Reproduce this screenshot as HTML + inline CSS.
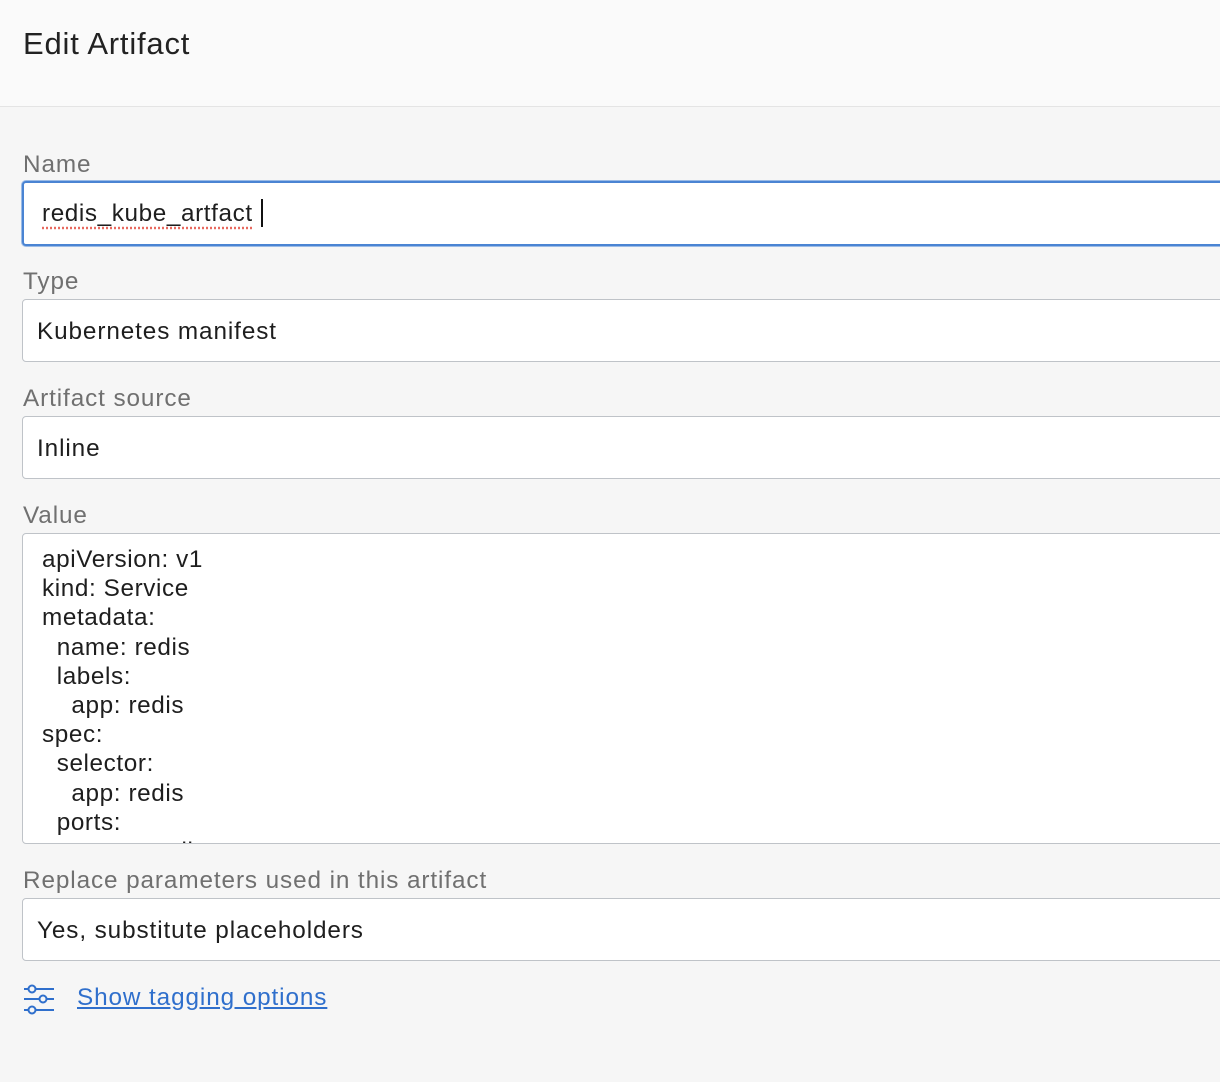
<!DOCTYPE html><html><head><style>
body{margin:0;width:1220px;height:1082px;overflow:hidden;background:#f6f6f6;font-family:"Liberation Sans",Arial,sans-serif;position:relative}
.hdr{position:absolute;left:0;top:0;width:1220px;height:106px;background:#fafafa;border-bottom:1px solid #e4e4e4}
.hdr div{position:absolute;left:23px;top:26px;font-size:31px;letter-spacing:0.8px;color:#222}
.lbl{position:absolute;left:23px;font-size:24.3px;letter-spacing:0.9px;color:#707070}
.box{position:absolute;left:22px;width:1220px;background:#fff;border:1px solid #bfc3c8;border-radius:4px;box-sizing:border-box;font-size:24.3px;letter-spacing:0.9px;color:#1e1e1e}
.box span{position:absolute;left:14px}
pre{margin:0;position:absolute;left:19px;top:11px;font-family:"Liberation Sans",Arial,sans-serif;font-size:24.3px;letter-spacing:0.6px;line-height:29.2px;color:#1e1e1e}
</style></head><body>
<div class="hdr"><div>Edit Artifact</div></div>
<div class="lbl" style="top:151px">Name</div>
<div class="box" style="top:181px;height:65px;border:2px solid #4a84d3;box-shadow:0 0 0 1px #9bbbe6"><span style="left:18px;top:17px;text-decoration:underline dotted #e86a5f;text-underline-offset:6px;letter-spacing:0.6px">redis_kube_artfact</span><span style="left:237px;top:16px;width:2px;height:28px;background:#111"></span></div>
<div class="lbl" style="top:268px">Type</div>
<div class="box" style="top:299px;height:63px"><span style="top:18px">Kubernetes manifest</span></div>
<div class="lbl" style="top:385px">Artifact source</div>
<div class="box" style="top:416px;height:63px"><span style="top:18px">Inline</span></div>
<div class="lbl" style="top:502px">Value</div>
<div class="box" style="top:533px;height:311px;overflow:hidden"><pre>apiVersion: v1
kind: Service
metadata:
  name: redis
  labels:
    app: redis
spec:
  selector:
    app: redis
  ports:
  - name: redis</pre></div>
<div class="lbl" style="top:867px">Replace parameters used in this artifact</div>
<div class="box" style="top:898px;height:63px"><span style="top:18px">Yes, substitute placeholders</span></div>
<svg style="position:absolute;left:22px;top:982px" width="34" height="34" viewBox="0 0 34 34" fill="none" stroke="#2f6fcc" stroke-width="2"><line x1="2" y1="7" x2="6" y2="7"/><circle cx="10" cy="7" r="3.5"/><line x1="14" y1="7" x2="32" y2="7"/><line x1="2" y1="17" x2="17" y2="17"/><circle cx="21" cy="17" r="3.5"/><line x1="25" y1="17" x2="32" y2="17"/><line x1="2" y1="28" x2="6" y2="28"/><circle cx="10" cy="28" r="3.5"/><line x1="14" y1="28" x2="32" y2="28"/></svg>
<div style="position:absolute;left:77px;top:984px;font-size:24.3px;letter-spacing:0.9px;color:#2f6fcc;text-decoration:underline">Show tagging options</div>
</body></html>
